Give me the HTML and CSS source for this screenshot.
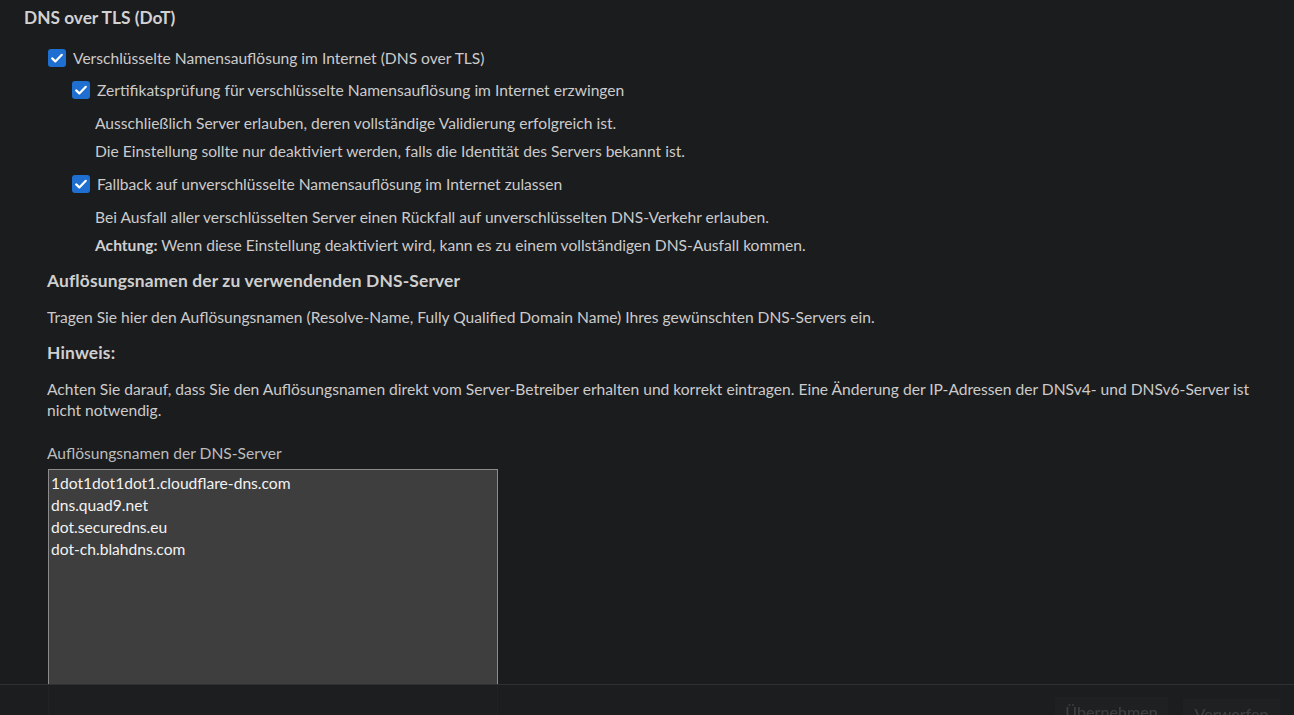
FILE: index.html
```html
<!DOCTYPE html>
<html lang="de">
<head>
<meta charset="utf-8">
<title>DNS over TLS (DoT)</title>
<link rel="stylesheet" href="styles.css">
</head>
<body>
<main class="content">
  <h2 class="title">DNS over TLS (DoT)</h2>

  <label class="check lvl1">
    <span class="box"><svg viewBox="0 0 18 18" width="18" height="18"><path d="M4.2 9.4l3.1 3 6.5-6.6" fill="none" stroke="#fff" stroke-width="2.2" stroke-linecap="round" stroke-linejoin="round"/></svg></span>
    <span>Verschlüsselte Namensauflösung im Internet (DNS over TLS)</span>
  </label>

  <label class="check lvl2">
    <span class="box"><svg viewBox="0 0 18 18" width="18" height="18"><path d="M4.2 9.4l3.1 3 6.5-6.6" fill="none" stroke="#fff" stroke-width="2.2" stroke-linecap="round" stroke-linejoin="round"/></svg></span>
    <span>Zertifikatsprüfung für verschlüsselte Namensauflösung im Internet erzwingen</span>
  </label>
  <p class="desc first">Ausschließlich Server erlauben, deren vollständige Validierung erfolgreich ist.</p>
  <p class="desc">Die Einstellung sollte nur deaktiviert werden, falls die Identität des Servers bekannt ist.</p>

  <label class="check lvl2 after-desc">
    <span class="box"><svg viewBox="0 0 18 18" width="18" height="18"><path d="M4.2 9.4l3.1 3 6.5-6.6" fill="none" stroke="#fff" stroke-width="2.2" stroke-linecap="round" stroke-linejoin="round"/></svg></span>
    <span>Fallback auf unverschlüsselte Namensauflösung im Internet zulassen</span>
  </label>
  <p class="desc first">Bei Ausfall aller verschlüsselten Server einen Rückfall auf unverschlüsselten DNS-Verkehr erlauben.</p>
  <p class="desc"><strong>Achtung:</strong> Wenn diese Einstellung deaktiviert wird, kann es zu einem vollständigen DNS-Ausfall kommen.</p>

  <h3 class="sub">Auflösungsnamen der zu verwendenden DNS-Server</h3>
  <p class="text">Tragen Sie hier den Auflösungsnamen (Resolve-Name, Fully Qualified Domain Name) Ihres gewünschten DNS-Servers ein.</p>
  <h4 class="sub">Hinweis:</h4>
  <p class="text">Achten Sie darauf, dass Sie den Auflösungsnamen direkt vom Server-Betreiber erhalten und korrekt eintragen. Eine Änderung der IP-Adressen der DNSv4- und DNSv6-Server ist nicht notwendig.</p>

  <label class="field-label" for="servers">Auflösungsnamen der DNS-Server</label>
  <textarea id="servers" class="servers" spellcheck="false">1dot1dot1dot1.cloudflare-dns.com
dns.quad9.net
dot.securedns.eu
dot-ch.blahdns.com</textarea>
</main>

<footer class="actionbar">
  <button class="btn btn-apply" type="button">Übernehmen</button>
  <button class="btn btn-discard" type="button">Verwerfen</button>
</footer>
</body>
</html>
```

FILE: styles.css
```css
html, body {
  margin: 0;
  padding: 0;
  background: #1b1c1e;
  height: 100%;
  overflow: hidden;
}

body {
  font-family: "Lato", "Noto Sans", "Liberation Sans", sans-serif;
  font-size: 15.6px;
  line-height: 22px;
  color: #cbcbcb;
}

.content {
  padding: 7px 24px 0 24px;
}

.title {
  margin: 0;
  font-size: 17.3px;
  line-height: 22px;
  font-weight: 700;
  color: #d2d2d2;
}

.check {
  display: flex;
  align-items: center;
  gap: 7px;
  height: 22px;
}

.check.lvl1 {
  margin: 18px 0 0 24px;
}

.check.lvl2 {
  margin: 10px 0 0 48px;
}

.check.lvl2.after-desc {
  margin-top: 11px;
}

.box {
  width: 18px;
  height: 18px;
  border-radius: 3px;
  background: #1f6fd0;
  display: flex;
  flex: none;
}

.desc {
  margin: 6px 0 0 71px;
}

.desc.first {
  margin-top: 11px;
}

.desc strong {
  font-weight: 700;
  color: #d0d0d0;
}

.sub {
  margin: 14px 0 0 23px;
  font-size: 17.4px;
  font-weight: 700;
  letter-spacing: 0.15px;
  color: #cfcfcf;
}

.text {
  margin: 15px 0 0 23px;
  line-height: 21px;
}

.field-label {
  display: block;
  margin: 21px 0 0 23px;
  color: #bdbdbd;
}

.servers {
  display: block;
  margin: 5px 0 0 24px;
  width: 450px;
  height: 280px;
  box-sizing: border-box;
  padding: 2px 2px;
  background: #3e3e3e;
  border: 1px solid #8c8c8c;
  border-radius: 0;
  color: #f2f2f2;
  font-family: inherit;
  font-size: 15.6px;
  line-height: 22px;
  resize: none;
  outline: none;
}

.actionbar {
  position: fixed;
  left: 0;
  right: 0;
  bottom: 0;
  height: 18px;
  padding: 12px 14px 0 0;
  display: flex;
  justify-content: flex-end;
  align-items: flex-start;
  gap: 15px;
  background: rgba(28, 29, 31, 0.96);
  border-top: 1px solid #2f3032;
}

.btn {
  font-family: inherit;
  font-size: 16px;
  line-height: 22px;
  height: 30px;
  padding: 0;
  border: 0;
  background: #1f2022;
  color: #3c3d3f;
  font-weight: 600;
  flex: none;
}

.btn-apply {
  width: 113px;
}

.btn-discard {
  width: 97px;
  margin-top: 2px;
}
```
